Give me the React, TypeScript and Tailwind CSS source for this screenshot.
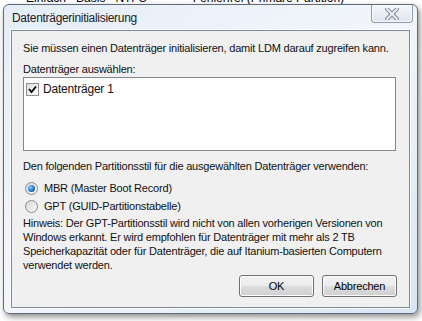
import React from 'react';

const font = { fontFamily: '"Liberation Sans", Arial, sans-serif' };

const CloseButton: React.FC = () => (
  <div className="mr-[4px] flex h-[18px] w-[42px] items-center justify-center rounded-b-[4px] border border-t-0 border-[#8e9bad] bg-gradient-to-b from-[#f4f7fb] to-[#dfe6ef] shadow-[inset_0_0_0_1px_rgba(255,255,255,0.7)]">
    <svg width="14" height="12" viewBox="0 0 14 12">
      <path d="M2 1 L12 11 M12 1 L2 11" stroke="#7b8593" strokeWidth="4" strokeLinecap="square" />
      <path d="M2 1 L12 11 M12 1 L2 11" stroke="#eef1f5" strokeWidth="2" strokeLinecap="square" />
    </svg>
  </div>
);

const Checkbox: React.FC = () => (
  <div className="flex h-[13px] w-[13px] shrink-0 items-center justify-center border border-[#8f8f8f] bg-gradient-to-br from-[#dcdcdc] to-white">
    <svg width="9" height="9" viewBox="0 0 9 9">
      <path d="M1 4 L3.5 7 L8 1.5" fill="none" stroke="#000" strokeWidth="1.8" />
    </svg>
  </div>
);

const Radio: React.FC<{ checked?: boolean }> = ({ checked }) => (
  <div className="flex h-[13px] w-[13px] shrink-0 items-center justify-center rounded-full border border-[#8c8c8c] bg-gradient-to-br from-[#d6d6d6] to-[#fbfbfb]">
    {checked && (
      <div className="h-[7px] w-[7px] rounded-full bg-[radial-gradient(circle_at_35%_35%,#8fd0ff,#1a6fb8_60%,#0a4a86)]" />
    )}
  </div>
);

const Button: React.FC<{ label: string }> = ({ label }) => (
  <div className="flex h-[22px] w-[75px] items-center justify-center rounded-[3px] border border-[#707070] bg-[linear-gradient(#f2f2f2_0%,#ebebeb_50%,#dddddd_51%,#cfcfcf_100%)] text-black shadow-[inset_0_0_0_1px_#fcfcfc]">
    {label}
  </div>
);

export default function App() {
  return (
    <div className="h-[321px] w-[422px] overflow-hidden whitespace-nowrap bg-white text-[#111]" style={font}>
      {/* background list behind the dialog */}
      <div className="h-[4px] overflow-hidden">
        <div className="-mt-[9px] flex text-[12px] leading-[14px] text-black">
          <span className="ml-[26px]">Einfach</span>
          <span className="ml-[10px]">Basis</span>
          <span className="ml-[10px]">NTFS</span>
          <span className="ml-[46px]">Fehlerfrei (Primäre Partition)</span>
        </div>
      </div>

      {/* dialog window */}
      <div className="ml-[3px] flex h-[310px] w-[415px] flex-col rounded-[6px] border border-[#5d6b7c] bg-gradient-to-br from-[#e4edf7] via-[#f2f6fb] to-[#d9e5f2] shadow-[2px_3px_6px_rgba(0,0,0,0.45)]">
        <div className="flex h-[25px] items-start justify-between">
          <div className="ml-[8px] mt-[6px] text-[12px] leading-[15px] tracking-[-0.3px] text-[#222]">Datenträgerinitialisierung</div>
          <CloseButton />
        </div>

        <div className="mx-[7px] flex-1 border border-[#7e8a99] bg-[#f0f0f0] px-[11px] text-[11px] leading-[14px] tracking-[-0.2px] shadow-[0_0_0_1px_rgba(255,255,255,0.8)]">
          <div className="mt-[10px]">Sie müssen einen Datenträger initialisieren, damit LDM darauf zugreifen kann.</div>
          <div className="mt-[7px]">Datenträger auswählen:</div>
          <div className="mt-[1px] h-[74px] w-[373px] border border-[#828790] bg-white px-[2px] pt-[4px]">
            <div className="flex items-center gap-[4px]">
              <Checkbox />
              <span className="text-[12px]">Datenträger 1</span>
            </div>
          </div>
          <div className="mt-[8px]">Den folgenden Partitionsstil für die ausgewählten Datenträger verwenden:</div>
          <div className="mt-[8px] flex items-center gap-[6px] pl-[2px]">
            <Radio checked />
            <span>MBR (Master Boot Record)</span>
          </div>
          <div className="mt-[4px] flex items-center gap-[6px] pl-[2px]">
            <Radio />
            <span>GPT (GUID-Partitionstabelle)</span>
          </div>
          <div className="mt-[3px] leading-[14px]">
            Hinweis: Der GPT-Partitionsstil wird nicht von allen vorherigen Versionen von
            <br />
            Windows erkannt. Er wird empfohlen für Datenträger mit mehr als 2 TB
            <br />
            Speicherkapazität oder für Datenträger, die auf Itanium-basierten Computern
            <br />
            verwendet werden.
          </div>
          <div className="mt-[3px] flex w-[374px] justify-end gap-[8px]">
            <Button label="OK" />
            <Button label="Abbrechen" />
          </div>
        </div>
        <div className="h-[5px]" />
      </div>
    </div>
  );
}
